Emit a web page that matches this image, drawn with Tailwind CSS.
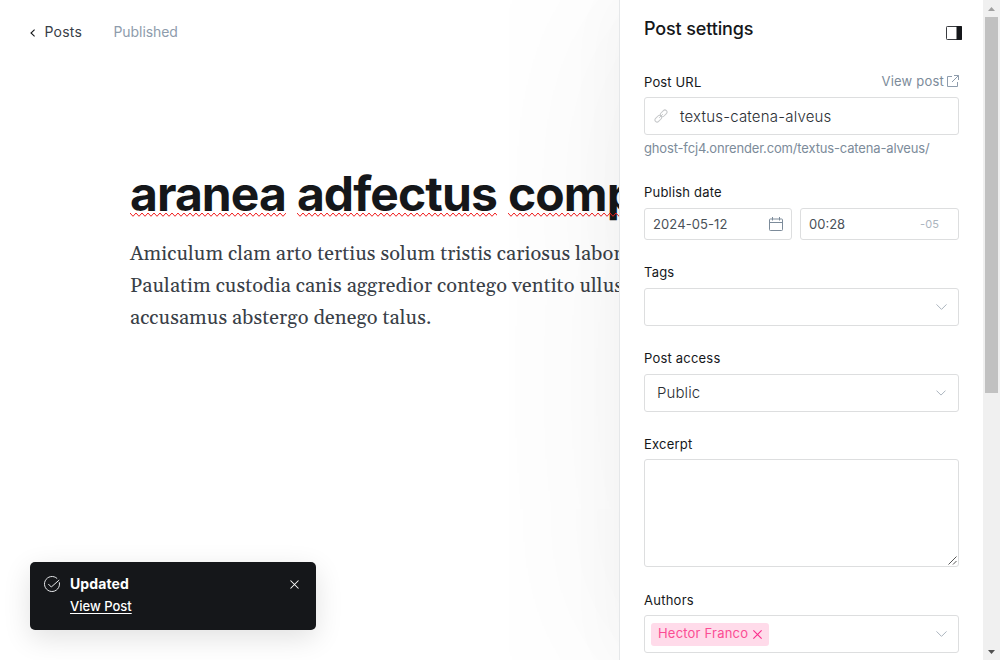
<!DOCTYPE html>
<html lang="en">
<head>
<meta charset="utf-8">
<title>Post settings</title>
<script src="https://cdn.jsdelivr.net/npm/@tailwindcss/browser@4"></script>
</head>
<body class="h-[660px] w-[1000px] overflow-hidden bg-white font-['Inter',sans-serif] text-[#15171a]">
<svg class="absolute h-0 w-0"><defs><pattern id="wave" width="6" height="6" patternUnits="userSpaceOnUse"><path d="M-1 .5L0 1 3 4.300 6 1 7 .5" fill="none" stroke="#f02020"/></pattern></defs></svg>
<div class="relative flex h-full">
  <main class="w-[619px] shrink-0">
    <header class="flex h-16 items-center pl-[30px] text-sm leading-5">
      <svg class="mt-[2px] h-[8px] w-[6px]" viewBox="0 0 6 8" fill="none" stroke="#15171a" stroke-width="1.1"><path d="M4.6.6 1 4l3.600 3.400"/></svg>
      <span class="ml-[8.500px] tracking-[0.2px] text-[#394047]">Posts</span>
      <span class="ml-[31.500px] tracking-[-0.07px] text-[#8e9cac]">Published</span>
    </header>
    <article class="pl-[130px] pt-[100px]">
      <h1 class="flex h-[60px] gap-[11px] whitespace-nowrap text-[48px] font-bold leading-[60px] tracking-[-0.92px]">
        <span class="relative">aranea<svg class="absolute left-0 top-[48px] h-[6px] w-full"><rect width="100%" height="6" fill="url(#wave)"/></svg></span>
        <span class="relative">adfectus<svg class="absolute left-0 top-[48px] h-[6px] w-full"><rect width="100%" height="6" fill="url(#wave)"/></svg></span>
        <span class="relative">comp<svg class="absolute left-0 top-[48px] h-[6px] w-full"><rect width="100%" height="6" fill="url(#wave)"/></svg></span>
      </h1>
      <p class="mt-[14px] whitespace-nowrap font-['Georgia','Gelasio','Liberation_Serif',serif] text-[20px] leading-8 tracking-[0.1px] text-[#394047]">Amiculum clam arto tertius solum tristis cariosus labor<br>Paulatim custodia canis aggredior contego ventito ullus<br>accusamus abstergo denego talus.</p>
    </article>
  </main>

  <aside class="relative z-10 w-[365px] shrink-0 border-l border-[#e5e7e9] bg-white pl-6 pr-[25px] shadow-[0_0_200px_rgba(0,0,0,0.055),0_0_60px_rgba(0,0,0,0.035)]">
    <div class="flex h-[72px] justify-between pt-4">
      <h2 class="text-[18px] font-medium leading-[26px] tracking-[-0.14px]">Post settings</h2>
      <svg class="-mr-[3px] mt-[10px] h-[14px] w-4" viewBox="0 0 16 14"><rect x=".5" y=".5" width="15" height="13" rx=".8" fill="#fff" stroke="#3a3c40"/><path d="M10.500 0h4.700q.8 0 .8.800v12.400q0 .8-.8.800H10.500z" fill="#15171a"/></svg>
    </div>
    <div class="flex h-[25px] justify-between text-[13px] leading-5">
      <label class="tracking-[0.15px]">Post URL</label>
      <a class="-mt-px flex text-[#7c8b9a]"><span class="tracking-[0.2px]">View post</span><svg class="ml-[3px] mt-1 h-3 w-3" viewBox="0 0 12 12" fill="none" stroke="#8e9cac"><path d="M5 1.500H.5v10h10V7M7 .5h4.500V5M11.500.5 5 7"/></svg></a>
    </div>
    <div class="flex h-[38px] items-center rounded-[3px] border border-[#dddedf] pl-[9px]">
      <svg class="h-[14px] w-[14px]" viewBox="0 0 14 14" fill="none" stroke="#c5c7c9"><rect x="-3.800" y="-2.100" width="7.600" height="4.200" rx="2.100" transform="translate(4.300 9.700) rotate(-45)"/><rect x="-3.800" y="-2.100" width="7.600" height="4.200" rx="2.100" transform="translate(9.700 4.300) rotate(-45)"/><path d="M5.200 8.800l3.600-3.600"/></svg>
      <span class="ml-3 mt-[2px] text-[15px] font-light leading-6 tracking-[0.2px] text-[#2a2e33]">textus-catena-alveus</span>
    </div>
    <p class="mt-[3px] text-[13px] leading-5 tracking-[-0.155px] text-[#7c8b9a]">ghost-fcj4.onrender.com/textus-catena-alveus/</p>

    <div class="mt-[25px] h-[25px] text-[13px] leading-[18px] tracking-[0.2px]">Publish date</div>
    <div class="flex h-8 gap-2 text-[13px] text-[#4a5158]">
      <div class="flex w-[148px] items-center justify-between rounded-[3px] border border-[#dddedf] pl-2 pr-2"><span class="mt-px tracking-[0.1px]">2024-05-12</span><svg class="h-[14px] w-[14px]" viewBox="0 0 14 14" fill="none" stroke="#7c8b9a"><rect x=".5" y="2" width="13" height="11.500" rx=".8"/><path d="M.5 5.500h13M3.500 0v3.500M10.500 0v3.500"/></svg></div>
      <div class="flex flex-1 items-center justify-between rounded-[3px] border border-[#dddedf] pl-2 pr-[19px]"><span class="mt-px">00:28</span><span class="text-[11px] tracking-[0.1px] text-[#abb4be]">-05</span></div>
    </div>

    <div class="mt-[23px] h-[25px] text-[13px] leading-[18px] tracking-[0.2px]">Tags</div>
    <div class="flex h-[38px] items-center justify-end rounded-[3px] border border-[#dddedf] pr-[11px]"><svg class="h-[6px] w-[11px]" viewBox="0 0 11 6" fill="none" stroke="#abb4be"><path d="M.5.4l5 5 5-5"/></svg></div>

    <div class="mt-[23px] h-[25px] text-[13px] leading-[18px] tracking-[0.2px]">Post access</div>
    <div class="flex h-[38px] items-center justify-between rounded-[3px] border border-[#dddedf] pl-3 pr-[12px]"><span class="text-[15px] font-light tracking-[0.1px] text-[#2a2e33]">Public</span><svg class="h-[6px] w-[10px]" viewBox="0 0 10 6" fill="none" stroke="#abb4be"><path d="M.5.6l4.500 4.500L9.500.6"/></svg></div>

    <div class="mt-[23px] h-6 text-[13px] leading-[18px] tracking-[0.2px]">Excerpt</div>
    <div class="flex h-[108px] items-end justify-end rounded-[3px] border border-[#dddedf]"><svg class="mb-px mr-px h-[9px] w-[9px]" viewBox="0 0 9 9" stroke="#444" stroke-width=".9"><path d="M.5 8.500l8-8M5 8.500l3.500-3.500"/></svg></div>

    <div class="mt-6 h-6 text-[13px] leading-[18px] tracking-[0.25px]">Authors</div>
    <div class="flex h-[38px] items-center justify-between rounded-[3px] border border-[#dddedf] pl-[6px] pr-[11px]">
      <span class="flex h-[23px] w-[118px] items-center rounded-[3px] bg-[#ffdbea] pl-[7px] text-[13px] text-[#fb4d94]"><span class="tracking-[0.2px]">Hector Franco</span><svg class="ml-[5px] h-[9px] w-[9px]" viewBox="0 0 8 8" stroke="#fb2d8d"><path d="M.3.3l7.400 7.400M7.700.3.300 7.700"/></svg></span>
      <svg class="h-[6px] w-[11px]" viewBox="0 0 11 6" fill="none" stroke="#abb4be"><path d="M.5.4l5 5 5-5"/></svg>
    </div>
  </aside>

  <div class="z-20 -ml-px flex w-[17px] flex-col bg-[#f0f0f0] pl-[2px] pr-[2px]">
    <div class="flex h-[17px] items-center justify-center"><svg class="mt-px h-1 w-[7px]" viewBox="0 0 7 4"><path d="M0 4 3.500 0 7 4z" fill="#a0a0a0"/></svg></div>
    <div class="h-[376px] bg-[#c1c1c1]"></div>
    <div class="mt-auto flex h-[17px] items-center justify-center"><svg class="h-1 w-[7px]" viewBox="0 0 7 4"><path d="M0 0 3.500 4 7 0z" fill="#505050"/></svg></div>
  </div>

  <div class="absolute left-[30px] top-[562px] flex h-[68px] w-[286px] rounded-[5px] bg-[#15171a] pl-[14px] pr-[17px] pt-3 text-white shadow-[0_8px_28px_rgba(0,0,0,0.12)]">
    <svg class="mt-[2px] h-4 w-4" viewBox="0 0 16 16" fill="none" stroke="#e6e8ea"><path d="M15.300 6.300A7.500 7.500 0 1 1 13.200 2.600M4.300 8l3 3 7.900-7"/></svg>
    <div class="ml-[10px] flex-1"><div class="text-sm font-bold leading-5 tracking-[0.1px]">Updated</div><div class="mt-[3px] text-[13px] font-medium leading-[18px] underline underline-offset-2">View Post</div></div>
    <svg class="mr-[0.5px] mt-[5.5px] h-[9px] w-[9px]" viewBox="0 0 9 9" stroke="#fff" stroke-width="1.050"><path d="M.5.5l8 8M8.500.5l-8 8"/></svg>
  </div>
</div>
</body>
</html>
